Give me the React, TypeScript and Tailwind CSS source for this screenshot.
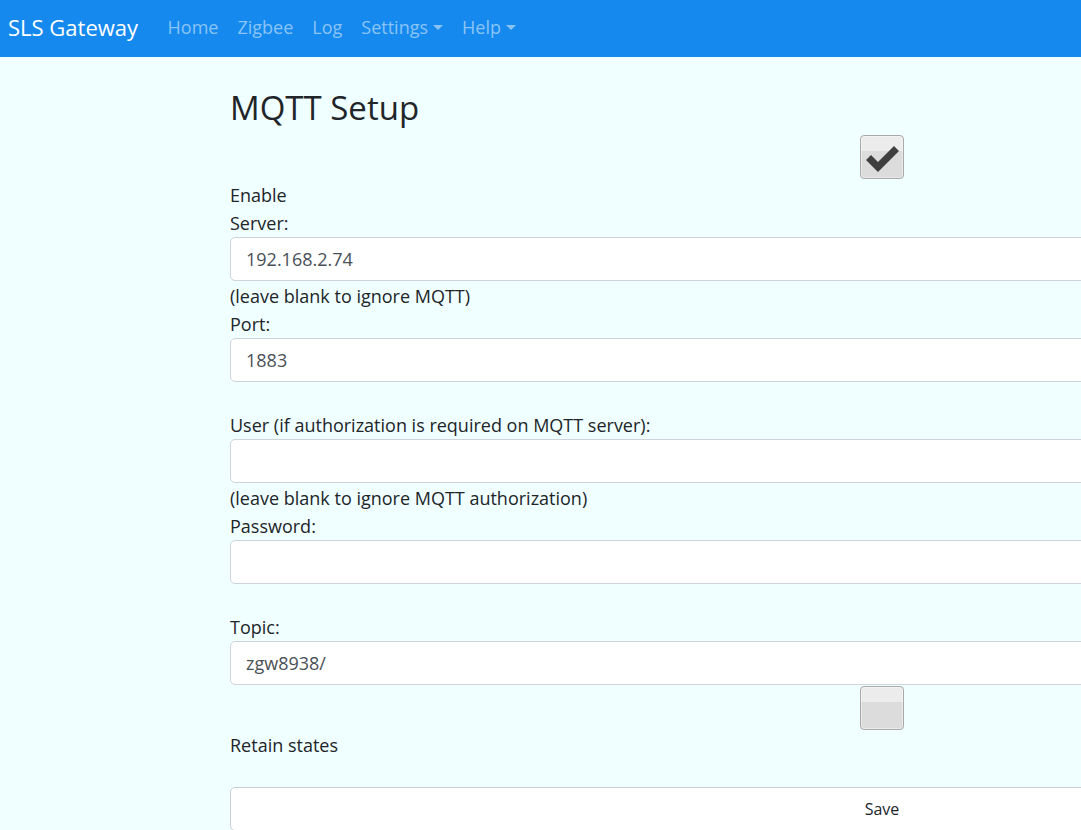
import React from "react";

function Caret() {
  return (
    <span className="ml-[5px] inline-block w-0 h-0 border-l-[5px] border-r-[5px] border-t-[5px] border-l-transparent border-r-transparent border-t-[#8ac4f6] align-middle" />
  );
}

function Check({ checked }: { checked: boolean }) {
  return (
    <div className="flex justify-center">
      <div className="w-[44px] h-[44px] rounded-[4px] border border-[#a9a9a9] bg-[linear-gradient(#ececec_0%,#ececec_36%,#dcdcdc_36%,#dcdcdc_100%)] shadow-[inset_0_0_0_1px_rgba(255,255,255,0.4)]">
        {checked && (
          <svg width="42" height="42" viewBox="0 0 42 42">
            <path d="M5 24 L10 19 L17 26 L33 10 L38 15 L17 36 Z" fill="#3f3f3f" />
          </svg>
        )}
      </div>
    </div>
  );
}

function Field({ value }: { value: string }) {
  return (
    <input
      readOnly
      defaultValue={value}
      className="block w-full h-[44px] border border-[#ced4da] rounded-[5px] bg-white px-[15px] text-[18px] text-[#495057] outline-none font-['Open_Sans',sans-serif]"
    />
  );
}

function Line({ children, className = "" }: { children?: React.ReactNode; className?: string }) {
  return <div className={"h-[28px] leading-[28px] text-[18px] " + className}>{children}</div>;
}

export default function App() {
  return (
    <div className="min-h-screen w-full overflow-hidden bg-[#f0ffff] font-['Open_Sans',sans-serif] text-[#212529]">
      <nav className="h-[57px] w-full bg-[#1589ee] flex items-center pl-[8px] pb-[3px]">
        <span className="text-[22px] text-white leading-none mr-[20px]">SLS Gateway</span>
        <div className="flex items-center text-[18px] text-[#8ac4f6] leading-none">
          <span className="px-[9.5px]">Home</span>
          <span className="px-[9.5px]">Zigbee</span>
          <span className="px-[9.5px]">Log</span>
          <span className="px-[9.5px] flex items-center">
            Settings
            <Caret />
          </span>
          <span className="px-[9.5px] flex items-center">
            Help
            <Caret />
          </span>
        </div>
      </nav>
      <div className="pl-[230px] pt-[32px]">
        <div className="w-[1304px]">
          <h1 className="text-[33px] leading-[38px] font-medium m-0">MQTT Setup</h1>
          <div className="mt-[8px]">
            <Check checked={true} />
          </div>
          <Line className="mt-[2px]">Enable</Line>
          <Line>Server:</Line>
          <Field value="192.168.2.74" />
          <Line className="mt-[1px]">(leave blank to ignore MQTT)</Line>
          <Line>Port:</Line>
          <Field value="1883" />
          <Line className="mt-[29px]">User (if authorization is required on MQTT server):</Line>
          <Field value="" />
          <Line className="mt-[1px]">(leave blank to ignore MQTT authorization)</Line>
          <Line>Password:</Line>
          <Field value="" />
          <Line className="mt-[29px]">Topic:</Line>
          <Field value="zgw8938/" />
          <div className="mt-[1px]">
            <Check checked={false} />
          </div>
          <Line className="mt-[1px]">Retain states</Line>
          <button className="mt-[28px] w-full h-[44px] border border-[#c8d0d4] rounded-[5px] bg-white text-[16px] text-[#212529] font-['Open_Sans',sans-serif]">
            Save
          </button>
        </div>
      </div>
    </div>
  );
}
